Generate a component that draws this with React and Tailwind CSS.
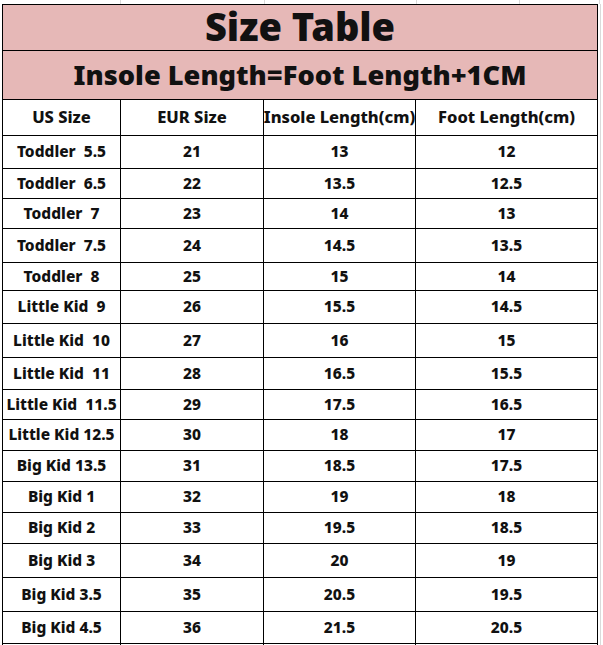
import React from 'react';

const rows = [
  ['Toddler  5.5', '21', '13', '12', 32],
  ['Toddler  6.5', '22', '13.5', '12.5', 29],
  ['Toddler  7', '23', '14', '13', 29],
  ['Toddler  7.5', '24', '14.5', '13.5', 33],
  ['Toddler  8', '25', '15', '14', 27],
  ['Little Kid  9', '26', '15.5', '14.5', 32],
  ['Little Kid  10', '27', '16', '15', 33],
  ['Little Kid  11', '28', '16.5', '15.5', 31],
  ['Little Kid  11.5', '29', '17.5', '16.5', 29],
  ['Little Kid 12.5', '30', '18', '17', 30],
  ['Big Kid 13.5', '31', '18.5', '17.5', 30],
  ['Big Kid 1', '32', '19', '18', 30],
  ['Big Kid 2', '33', '19.5', '18.5', 30],
  ['Big Kid 3', '34', '20', '19', 33],
  ['Big Kid 3.5', '35', '20.5', '19.5', 33],
  ['Big Kid 4.5', '36', '21.5', '20.5', 31],
];

const Row = ({ cells, height, className = '' }) => (
  <div className={`flex border-t border-black ${className}`} style={{ height }}>
    <div className="w-[118px] shrink-0 border-r border-black flex items-center justify-center whitespace-pre">{cells[0]}</div>
    <div className="w-[143px] shrink-0 border-r border-black flex items-center justify-center">{cells[1]}</div>
    <div className="w-[152px] shrink-0 border-r border-black flex items-center justify-center whitespace-nowrap">{cells[2]}</div>
    <div className="flex-1 flex items-center justify-center whitespace-nowrap">{cells[3]}</div>
  </div>
);

const App = () => {
  return (
    <div className="w-[603px] h-[645px] overflow-hidden bg-white font-['Noto_Sans',sans-serif] font-extrabold text-[#111]">
      {/* faint sheet grid above the table */}
      <div className="flex h-[4px]">
        <div className="w-[121px] border-r border-[#dadada]" />
        <div className="w-[144px] border-r border-[#dadada]" />
        <div className="w-[152px] border-r border-[#dadada]" />
        <div className="w-[103px] border-r border-[#dadada]" />
        <div className="w-[80px] border-r border-[#dadada]" />
      </div>
      <div className="flex">
        <div className="w-[2px] shrink-0" />
        <div className="w-[596px] shrink-0 border-x border-t border-black">
          <div className="h-[45px] bg-[#e6b8b7] flex items-center justify-center text-[38px] font-black leading-none pb-[3px]">
            Size Table
          </div>
          <div className="h-[49px] border-t border-black bg-[#e6b8b7] flex items-center justify-center text-[27.2px] font-black leading-none">
            Insole Length=Foot Length+1CM
          </div>
          <Row
            cells={['US Size', 'EUR Size', 'Insole Length(cm)', 'Foot Length(cm)']}
            height={36}
            className="text-[16.5px]"
          />
          {rows.map((r, i) => (
            <Row key={i} cells={r} height={r[4] + 1} className="text-[15.5px]" />
          ))}
          <Row cells={['', '', '', '']} height={20} />
        </div>
        <div className="w-[2px] shrink-0" />
        <div className="w-[3px] shrink-0 border-l border-[#dadada]" />
      </div>
    </div>
  );
};

export default App;
